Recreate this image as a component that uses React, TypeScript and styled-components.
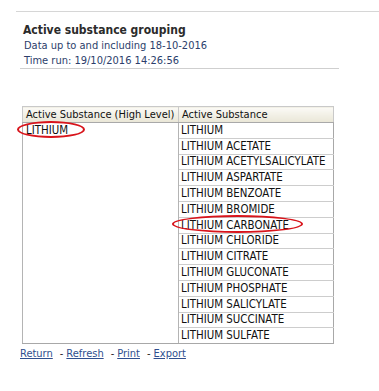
import React from "react";
import styled, { createGlobalStyle } from "styled-components";

const Global = createGlobalStyle`
  html, body { margin: 0; padding: 0; background: #fff; }
  body { font-family: "DejaVu Sans Condensed", "DejaVu Sans", sans-serif; }
`;

const Page = styled.div`
  width: 379px;
  height: 391px;
  padding-top: 11px;
  box-sizing: border-box;
  overflow: hidden;
`;

const TopRule = styled.div`
  margin-left: 16px;
  border-top: 1px solid #d6d6d6;
`;

const Info = styled.div`
  margin-left: 20px;
  width: 316px;
  padding: 11px 0 0 3px;
  border-bottom: 1px solid #cfcfcf;
`;

const Title = styled.div`
  font-size: 12px;
  font-weight: bold;
  color: #2b2b2b;
  line-height: 15px;
`;

const Sub = styled.div`
  font-size: 11px;
  color: #2c3e6b;
  line-height: 15px;
  padding-left: 1px;
`;

const Table = styled.table`
  margin: 37px 0 0 22px;
  border-collapse: collapse;
  font-size: 11px;
  color: #111;
`;

const Th = styled.th<{ $w: number }>`
  width: ${(p) => p.$w}px;
  height: 15px;
  padding: 0 3px;
  text-align: left;
  font-weight: normal;
  white-space: nowrap;
  background: linear-gradient(#fbfaf6, #e9e6d6);
  border: 1px solid #c9c9c9;
  border-bottom-color: #a9a9a9;
`;

const Td = styled.td`
  height: 14.8px;
  padding: 0 2px;
  white-space: nowrap;
  vertical-align: middle;
  line-height: 13px;
  font-size: 11.4px;
  border: 1px solid #cdcdcd;
  border-right-color: #a8a8a8;
`;

const GroupTd = styled.td`
  vertical-align: top;
  padding: 1px 3px 0;
  border: 1px solid #b4b4b4;
  border-bottom-color: #a8a8a8;
  line-height: 13px;
  font-size: 11.4px;
`;

const LastTd = styled(Td)`
  border-bottom-color: #a8a8a8;
`;

const Mark = styled.span`
  position: relative;
  display: inline-block;
`;

const Oval = styled.span<{ $l: number; $t: number; $w: number; $h: number }>`
  position: absolute;
  left: ${(p) => p.$l}px;
  top: ${(p) => p.$t}px;
  width: ${(p) => p.$w}px;
  height: ${(p) => p.$h}px;
  border: 2px solid #d8141b;
  border-radius: 50%;
  box-sizing: border-box;
  pointer-events: none;
`;

const Links = styled.div`
  margin: 3px 0 0 20px;
  font-size: 11px;
  color: #222;
  display: flex;
`;

const A = styled.a`
  color: #2f4f8f;
  text-decoration: underline;
`;

const Sep = styled.span`
  margin: 0 3px 0 7px;
`;

const items = [
  "LITHIUM",
  "LITHIUM ACETATE",
  "LITHIUM ACETYLSALICYLATE",
  "LITHIUM ASPARTATE",
  "LITHIUM BENZOATE",
  "LITHIUM BROMIDE",
  "LITHIUM CARBONATE",
  "LITHIUM CHLORIDE",
  "LITHIUM CITRATE",
  "LITHIUM GLUCONATE",
  "LITHIUM PHOSPHATE",
  "LITHIUM SALICYLATE",
  "LITHIUM SUCCINATE",
  "LITHIUM SULFATE",
];

export default function App() {
  return (
    <Page>
      <Global />
      <TopRule />
      <Info>
        <Title>Active substance grouping</Title>
        <Sub>Data up to and including 18-10-2016</Sub>
        <Sub>Time run: 19/10/2016 14:26:56</Sub>
      </Info>
      <Table>
        <thead>
          <tr>
            <Th $w={149}>Active Substance (High Level)</Th>
            <Th $w={148}>Active Substance</Th>
          </tr>
        </thead>
        <tbody>
          {items.map((it, i) => {
            const cell =
              it === "LITHIUM CARBONATE" ? (
                <Mark>
                  {it}
                  <Oval $l={-9} $t={-4} $w={131} $h={18} />
                </Mark>
              ) : (
                it
              );
            const C = i === items.length - 1 ? LastTd : Td;
            return (
              <tr key={it}>
                {i === 0 && (
                  <GroupTd rowSpan={items.length}>
                    <Mark>
                      LITHIUM
                      <Oval $l={-9} $t={-3} $w={68} $h={17} />
                    </Mark>
                  </GroupTd>
                )}
                <C>{cell}</C>
              </tr>
            );
          })}
        </tbody>
      </Table>
      <Links>
        <A href="#">Return</A>
        <Sep>-</Sep>
        <A href="#">Refresh</A>
        <Sep>-</Sep>
        <A href="#">Print</A>
        <Sep>-</Sep>
        <A href="#">Export</A>
      </Links>
    </Page>
  );
}
